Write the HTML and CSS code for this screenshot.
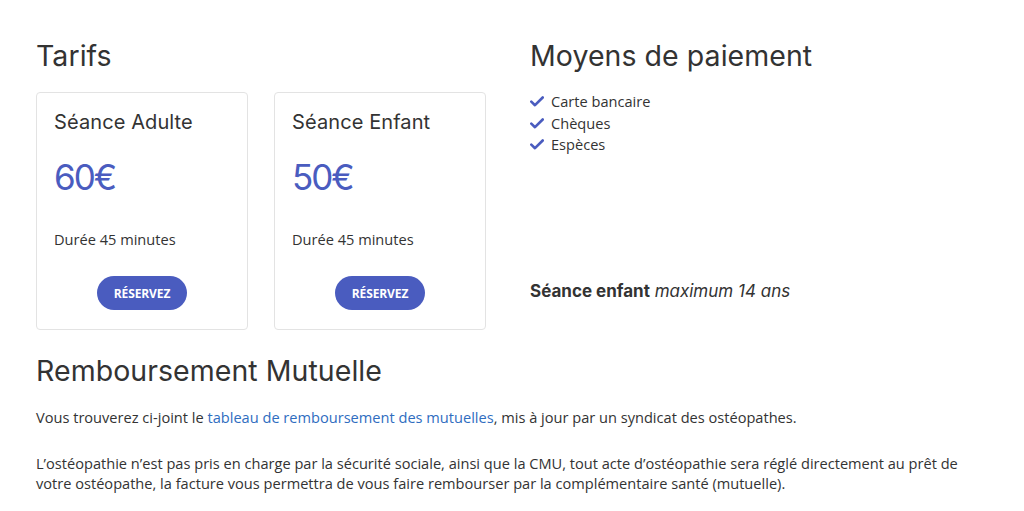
FILE: index.html
```html
<!DOCTYPE html>
<html lang="fr">
<head>
<meta charset="utf-8">
<link rel="stylesheet" href="styles.css">
</head>
<body>
<div class="page">
  <div class="top">
    <section class="tarifs">
      <h2 class="title">Tarifs</h2>
      <div class="cards">
        <div class="card">
          <h3 class="card-title">Séance Adulte</h3>
          <div class="price">60€</div>
          <div class="duration">Durée 45 minutes</div>
          <div class="btn-row"><a class="btn">RÉSERVEZ</a></div>
        </div>
        <div class="card">
          <h3 class="card-title">Séance Enfant</h3>
          <div class="price">50€</div>
          <div class="duration">Durée 45 minutes</div>
          <div class="btn-row"><a class="btn">RÉSERVEZ</a></div>
        </div>
      </div>
    </section>
    <section class="paiement">
      <h2 class="title">Moyens de paiement</h2>
      <ul class="checks">
        <li><svg class="check" viewBox="0 0 14 11"><path d="M1.3 5.6 L5 9.2 L12.7 1.5" fill="none" stroke="#4a5cbf" stroke-width="2.6" stroke-linecap="round" stroke-linejoin="round"/></svg>Carte bancaire</li>
        <li><svg class="check" viewBox="0 0 14 11"><path d="M1.3 5.6 L5 9.2 L12.7 1.5" fill="none" stroke="#4a5cbf" stroke-width="2.6" stroke-linecap="round" stroke-linejoin="round"/></svg>Chèques</li>
        <li><svg class="check" viewBox="0 0 14 11"><path d="M1.3 5.6 L5 9.2 L12.7 1.5" fill="none" stroke="#4a5cbf" stroke-width="2.6" stroke-linecap="round" stroke-linejoin="round"/></svg>Espèces</li>
      </ul>
      <p class="note"><strong>Séance enfant</strong> <em>maximum 14 ans</em></p>
    </section>
  </div>
  <section class="rembours">
    <h2 class="title">Remboursement Mutuelle</h2>
    <p class="text">Vous trouverez ci-joint le <a class="link">tableau de remboursement des mutuelles</a>, mis à jour par un syndicat des ostéopathes.</p>
    <p class="text">L’ostéopathie n’est pas pris en charge par la sécurité sociale, ainsi que la CMU, tout acte d’ostéopathie sera réglé directement au prêt de votre ostéopathe, la facture vous permettra de vous faire rembourser par la complémentaire santé (mutuelle).</p>
  </section>
</div>
</body>
</html>
```
FILE: styles.css
```css
* { box-sizing: border-box; }
html, body { margin: 0; padding: 0; background: #fff; }
body {
  font-family: "Open Sans", "Liberation Sans", sans-serif;
  font-size: 14.6px;
  color: #333;
}
.page {
  width: 952px;
  margin-left: 36px;
  padding-top: 39px;
}
.top {
  display: grid;
  grid-template-columns: 450px 1fr;
  column-gap: 44px;
}
.title {
  font-family: Inter, "Noto Sans", sans-serif;
  font-weight: 400;
  font-size: 28.5px;
  line-height: 34px;
  letter-spacing: 0.05px;
  color: #333;
  margin: 0;
}
.cards {
  display: flex;
  gap: 26px;
  margin-top: 19px;
}
.card {
  width: 212px;
  border: 1px solid #e3e3e3;
  border-radius: 4px;
  padding: 17px 17px 19px 17px;
}
.card-title {
  font-family: Inter, "Noto Sans", sans-serif;
  font-weight: 400;
  font-size: 20px;
  line-height: 24px;
  margin: 0;
  color: #333;
  letter-spacing: 0.1px;
}
.price {
  font-family: Inter, "Noto Sans", sans-serif;
  font-size: 35px;
  line-height: 43px;
  color: #4a5cbf;
  margin-top: 22px;
  letter-spacing: -2px;
}
.duration {
  line-height: 20px;
  margin-top: 30px;
}
.btn-row {
  display: flex;
  justify-content: center;
  margin-top: 27px;
}
.btn {
  display: flex;
  align-items: center;
  justify-content: center;
  width: 90px;
  height: 34px;
  border-radius: 17px;
  background: #4a5cbf;
  color: #fff;
  font-weight: 700;
  font-size: 12px;
  letter-spacing: -0.1px;
}
.checks {
  list-style: none;
  margin: 18px 0 0 0;
  padding: 0;
}
.checks li {
  display: flex;
  align-items: center;
  line-height: 21.5px;
}
.check {
  width: 14px;
  height: 11px;
  margin-right: 7px;
}
.note {
  font-family: Inter, "Noto Sans", sans-serif;
  font-size: 17px;
  line-height: 20px;
  margin: 125px 0 0 0;
  color: #333;
}
.note strong { font-weight: 700; }
.rembours { margin-top: 24px; }
.text {
  line-height: 20px;
  margin: 0;
}
.rembours .title + .text { margin-top: 19px; }
.text + .text { margin-top: 26px; }
.link { color: #2f6dbf; text-decoration: none; }
```
